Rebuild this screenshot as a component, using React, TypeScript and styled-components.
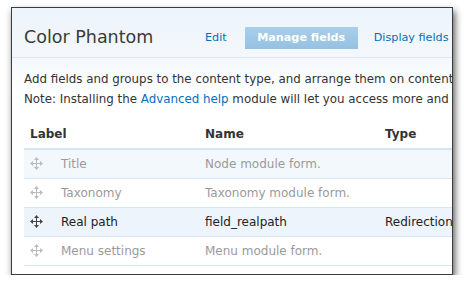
import React from 'react'
import styled, { createGlobalStyle } from 'styled-components'

const GlobalStyle = createGlobalStyle`
  html, body {
    margin: 0;
    padding: 0;
    background: #ffffff;
  }
  body {
    font-family: 'DejaVu Sans', Verdana, sans-serif;
  }
`

interface Field {
  label: string
  name: string
  type: string
  locked: boolean
}

const fields: Field[] = [
  { label: 'Title', name: 'Node module form.', type: '', locked: true },
  { label: 'Taxonomy', name: 'Taxonomy module form.', type: '', locked: true },
  { label: 'Real path', name: 'field_realpath', type: 'Redirection', locked: false },
  { label: 'Menu settings', name: 'Menu module form.', type: '', locked: true },
]

const DragIcon = ({ dark }: { dark: boolean }) => (
  <svg width="13" height="13" viewBox="0 0 13 13">
    <g fill={dark ? '#444' : '#bbb'}>
      <rect x="6" y="2" width="1" height="9" />
      <rect x="2" y="6" width="9" height="1" />
      <path d="M6.5 0 L9 3 L4 3 Z" />
      <path d="M6.5 13 L9 10 L4 10 Z" />
      <path d="M0 6.5 L3 4 L3 9 Z" />
      <path d="M13 6.5 L10 4 L10 9 Z" />
    </g>
  </svg>
)

export default function App() {
  return (
    <>
      <GlobalStyle />
      <Window>
        <Header>
          <Title>Color Phantom</Title>
          <Tabs>
            <Tab>Edit</Tab>
            <Tab active>Manage fields</Tab>
            <Tab>Display fields</Tab>
          </Tabs>
        </Header>
        <Body>
          <Help>
            Add fields and groups to the content type, and arrange them on content
            <br />
            Note: Installing the <Link>Advanced help</Link> module will let you access more and
          </Help>
          <Table>
            <colgroup>
              <col style={{ width: 175 }} />
              <col style={{ width: 180 }} />
              <col />
            </colgroup>
            <thead>
              <tr>
                <HeadCell>Label</HeadCell>
                <HeadCell>Name</HeadCell>
                <HeadCell>Type</HeadCell>
              </tr>
            </thead>
            <tbody>
              {fields.map((f, i) => (
                <Row key={f.label} striped={i % 2 === 0} highlight={!f.locked}>
                  <Cell locked={f.locked}>
                    <LabelWrap>
                      <DragIcon dark={!f.locked} />
                      {f.label}
                    </LabelWrap>
                  </Cell>
                  <Cell locked={f.locked}>{f.name}</Cell>
                  <Cell locked={f.locked}>{f.type}</Cell>
                </Row>
              ))}
            </tbody>
          </Table>
        </Body>
      </Window>
    </>
  )
}

const Window = styled.div`
  margin: 7px 0 0 11px;
  width: 440px;
  height: 266px;
  border: 1px solid #3c3c3c;
  background: #ffffff;
  box-shadow: 2px 4px 7px rgba(0, 0, 0, 0.65);
  overflow: hidden;
`

const Header = styled.div`
  display: flex;
  align-items: flex-end;
  height: 50px;
  box-sizing: border-box;
  padding: 0 0 8px 12px;
  background: linear-gradient(#ecf3fa, #f4f8fc);
  border-bottom: 1px solid #dfe8f1;
  white-space: nowrap;
`

const Title = styled.h1`
  flex-shrink: 0;
  margin: 0 0 1px 0;
  font-family: 'DejaVu Sans', Verdana, sans-serif;
  font-weight: normal;
  font-size: 17.5px;
  line-height: 22px;
  color: #3a3a3a;
  width: 169px;
`

const Tabs = styled.div`
  display: flex;
  align-items: center;
  flex-shrink: 0;
`

const Tab = styled.span<{ active?: boolean }>`
  font-size: 11.2px;
  line-height: 22px;
  padding: 0 ${({ active }) => (active ? '12.5px' : '12px')};
  margin-right: ${({ active }) => (active ? '4px' : '6px')};
  color: ${({ active }) => (active ? '#ffffff' : '#0070c0')};
  font-weight: ${({ active }) => (active ? 'bold' : 'normal')};
  background: ${({ active }) => (active ? 'linear-gradient(#a9cfea, #95c1e2)' : 'transparent')};
`

const Body = styled.div`
  padding: 0 0 0 12px;
  background: linear-gradient(#f5f9fc, #ffffff 40px);
  white-space: nowrap;
`

const Help = styled.p`
  margin: 0;
  padding-top: 11px;
  font-size: 11.85px;
  line-height: 20px;
  color: #333333;
`

const Link = styled.span`
  color: #0070c0;
`

const Table = styled.table`
  margin-top: 17px;
  width: 560px;
  table-layout: fixed;
  border-collapse: collapse;
  font-size: 12px;
`

const HeadCell = styled.th`
  text-align: left;
  font-weight: bold;
  color: #333333;
  padding: 0 0 6px 6px;
  height: 16px;
  border-bottom: 2px solid #d6e6f4;
`

const Row = styled.tr<{ striped: boolean; highlight: boolean }>`
  height: 29px;
  background: ${({ striped, highlight }) =>
    highlight ? '#edf4fb' : striped ? '#f3f8fd' : '#ffffff'};
  border-bottom: 1px solid #d6e6f4;
`

const Cell = styled.td<{ locked: boolean }>`
  padding: 0 0 0 6px;
  color: ${({ locked }) => (locked ? '#9a9a9a' : '#222222')};
  vertical-align: middle;
`

const LabelWrap = styled.div`
  display: flex;
  align-items: center;
  gap: 18px;
`
